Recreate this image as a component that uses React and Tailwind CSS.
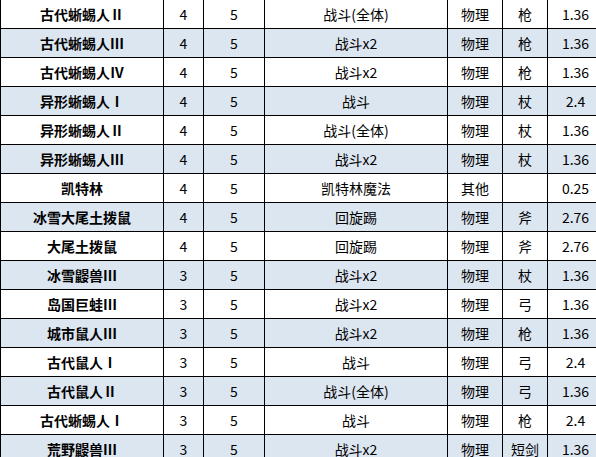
import React from "react";

const rows = [
  ["古代蜥蜴人Ⅱ", "4", "5", "战斗(全体)", "物理", "枪", "1.36"],
  ["古代蜥蜴人Ⅲ", "4", "5", "战斗x2", "物理", "枪", "1.36"],
  ["古代蜥蜴人Ⅳ", "4", "5", "战斗x2", "物理", "枪", "1.36"],
  ["异形蜥蜴人Ⅰ", "4", "5", "战斗", "物理", "杖", "2.4"],
  ["异形蜥蜴人Ⅱ", "4", "5", "战斗(全体)", "物理", "杖", "1.36"],
  ["异形蜥蜴人Ⅲ", "4", "5", "战斗x2", "物理", "杖", "1.36"],
  ["凯特林", "4", "5", "凯特林魔法", "其他", "", "0.25"],
  ["冰雪大尾土拨鼠", "4", "5", "回旋踢", "物理", "斧", "2.76"],
  ["大尾土拨鼠", "4", "5", "回旋踢", "物理", "斧", "2.76"],
  ["冰雪鼹兽Ⅲ", "3", "5", "战斗x2", "物理", "杖", "1.36"],
  ["岛国巨蛙Ⅲ", "3", "5", "战斗x2", "物理", "弓", "1.36"],
  ["城市鼠人Ⅲ", "3", "5", "战斗x2", "物理", "枪", "1.36"],
  ["古代鼠人Ⅰ", "3", "5", "战斗", "物理", "弓", "2.4"],
  ["古代鼠人Ⅱ", "3", "5", "战斗(全体)", "物理", "弓", "1.36"],
  ["古代蜥蜴人Ⅰ", "3", "5", "战斗", "物理", "枪", "2.4"],
  ["荒野鼹兽Ⅲ", "3", "5", "战斗x2", "物理", "短剑", "1.36"],
];

export default function App() {
  return (
    <div
      className="w-[596px] h-[457px] overflow-hidden bg-white"
      style={{ fontFamily: '"Noto Sans CJK SC", "Noto Sans", sans-serif' }}
    >
      <div className="grid w-[603px] grid-cols-[162px_39px_60px_182px_54px_44px_55px] auto-rows-[28px] gap-px bg-black pl-px pb-px">
        {rows.map((row, i) => {
          const bg = i % 2 === 1 ? "bg-[#dce6f1]" : "bg-white";
          return row.map((cell, j) => (
            <div
              key={i + "-" + j}
              className={`${bg} flex items-center justify-center leading-none text-black ${
                j === 0 ? "text-[14px] font-bold" : "text-[14px]"
              }`}
            >
              {cell}
            </div>
          ));
        })}
      </div>
    </div>
  );
}
